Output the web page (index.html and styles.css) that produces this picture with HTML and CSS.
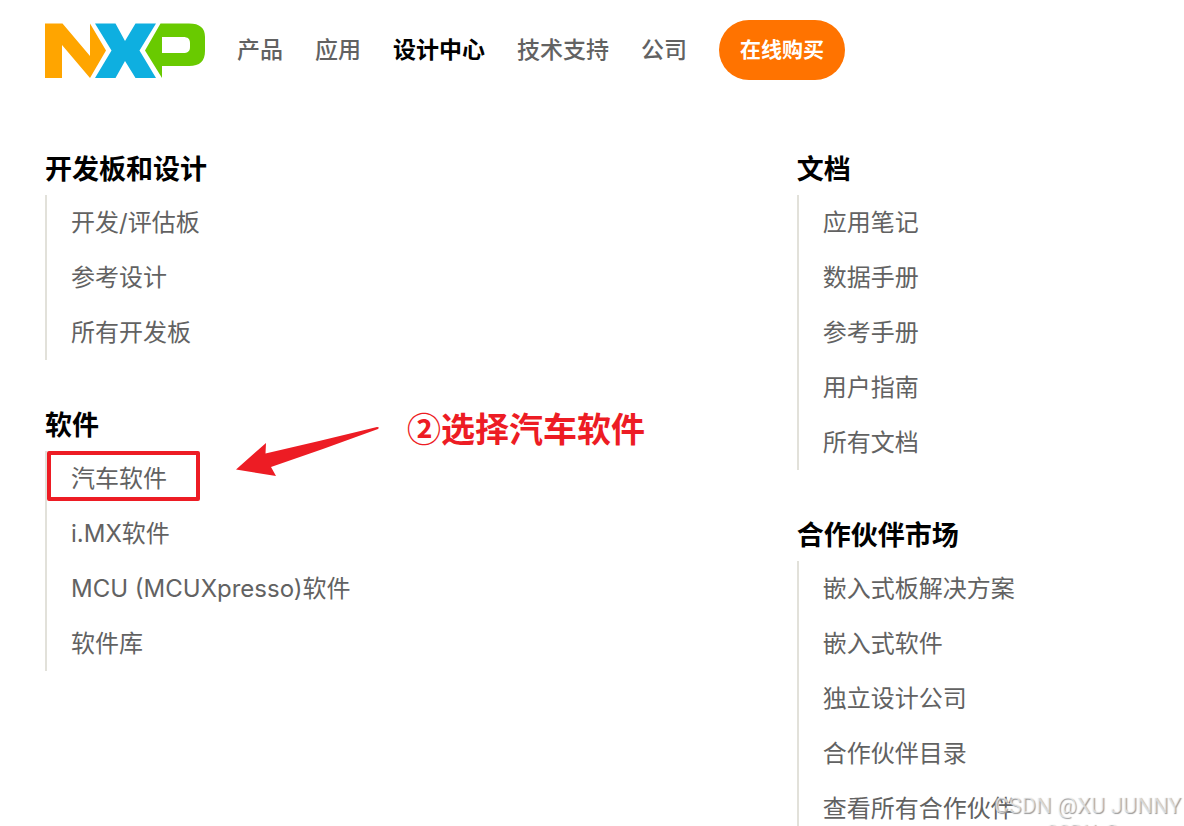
FILE: index.html
```html
<!DOCTYPE html>
<html lang="zh-CN">
<head>
<meta charset="utf-8">
<title>NXP 设计中心</title>
<link rel="stylesheet" href="styles.css">
</head>
<body>
<div class="page">
  <header class="header">
    <a class="logo" href="#" aria-label="NXP">
      <svg width="160" height="56" viewBox="0 -1 160 56" aria-hidden="true">
        <path fill="#ffa500" d="M0 .5h17.500L45 33V.5L61 27.500 45 55 17 22v33H0z"/>
        <path fill="#0eafe0" d="M50 .5h20.500L80 18 90.500.5H111L94.500 27.500 111 55H90.500L80 38 70.500 55H50L66.500 27.500z"/>
        <path fill="#69ca00" fill-rule="evenodd" d="M115.500.5H144C155 .5 160 5 160 14v14c0 10-5 15-16 15h-27v12L100 27.500zM117 14v16h21c5 0 7-2 7-6v-4c0-4-2-6-7-6z"/>
      </svg>
    </a>
    <nav class="nav">
      <a href="#">产品</a>
      <a href="#">应用</a>
      <a class="current" href="#">设计中心</a>
      <a href="#">技术支持</a>
      <a href="#">公司</a>
    </nav>
    <button class="buy" type="button">在线购买</button>
  </header>
  <main class="menu">
    <div class="column">
      <section>
        <h2>开发板和设计</h2>
        <ul>
          <li><a href="#">开发/评估板</a></li>
          <li><a href="#">参考设计</a></li>
          <li><a href="#">所有开发板</a></li>
        </ul>
      </section>
      <section>
        <h2>软件</h2>
        <ul>
          <li class="marked">
            <a href="#">汽车软件</a>
            <svg class="arrow" width="144" height="52" viewBox="0 0 144 52" aria-hidden="true">
              <path fill="#ed1c24" d="M0 43.500 30 17l-.5 10.500Q84 15 141 1q3 0 1 2Q88 23 35 41l5 9z"/>
            </svg>
            <strong class="note">②选择汽车软件</strong>
          </li>
          <li><a href="#">i.MX软件</a></li>
          <li><a href="#">MCU (MCUXpresso)软件</a></li>
          <li><a href="#">软件库</a></li>
        </ul>
      </section>
    </div>
    <div class="column">
      <section>
        <h2>文档</h2>
        <ul>
          <li><a href="#">应用笔记</a></li>
          <li><a href="#">数据手册</a></li>
          <li><a href="#">参考手册</a></li>
          <li><a href="#">用户指南</a></li>
          <li><a href="#">所有文档</a></li>
        </ul>
      </section>
      <section>
        <h2>合作伙伴市场</h2>
        <ul>
          <li><a href="#">嵌入式板解决方案</a></li>
          <li><a href="#">嵌入式软件</a></li>
          <li><a href="#">独立设计公司</a></li>
          <li><a href="#">合作伙伴目录</a></li>
          <li><a href="#">查看所有合作伙伴</a></li>
        </ul>
      </section>
    </div>
  </main>
  <div class="watermark">CSDN @XU JUNNY</div>
  <div class="watermark second">CSDN @</div>
</div>
</body>
</html>
```

FILE: styles.css
```css
*, *::before { box-sizing: border-box; }
body {
  margin: 0;
  background: #fff;
  color: #000;
  font-family: Inter, "Noto Sans CJK SC", sans-serif;
}
a { color: inherit; text-decoration: none; }
.page {
  position: relative;
  height: 100vh;
  overflow: hidden;
}
.header {
  display: flex;
  align-items: center;
  gap: 32px;
  padding: 20px 45px;
}
.logo, .logo svg { display: block; }
.nav {
  display: flex;
  gap: 32px;
  color: #626262;
  font-size: 23px;
  font-weight: 500;
  line-height: 32px;
}
.nav .current { color: #000; font-weight: 700; }
.buy {
  height: 60px;
  padding: 0 21px;
  border: 0;
  border-radius: 30px;
  background: #ff7300;
  color: #fff;
  font: 700 21px/32px Inter, "Noto Sans CJK SC", sans-serif;
}
.menu {
  display: grid;
  grid-template-columns: 66% 1fr;
  padding: 50px 0 0 45px;
}
.column {
  display: flex;
  flex-direction: column;
  gap: 46px;
}
h2 {
  margin: 0 0 5px;
  font-size: 27px;
  font-weight: 700;
  line-height: 40px;
}
ul {
  margin: 0;
  padding: 0 0 0 24px;
  border-left: 2px solid #e2e1da;
  list-style: none;
}
li {
  position: relative;
  color: #626262;
  font-size: 24px;
  line-height: 55px;
}
li a { display: block; }
/* Frame, arrow and caption drawn over the menu */
.marked::before {
  content: "";
  position: absolute;
  top: 0;
  left: -24px;
  width: 153px;
  height: 50px;
  border: 4px solid #ed1c24;
  border-radius: 2px;
}
.arrow {
  position: absolute;
  top: -25px;
  left: 165px;
}
.note {
  position: absolute;
  top: -48px;
  left: 336px;
  color: #ed1c24;
  font: 700 34px/50px "Noto Sans CJK SC", sans-serif;
  white-space: nowrap;
}
.watermark {
  position: absolute;
  right: 3px;
  bottom: 6px;
  color: rgba(255, 255, 255, 0.6);
  font: 22px/28px Roboto, sans-serif;
  text-shadow: 1px 1px 1px #999;
}
.watermark.second {
  right: 64px;
  bottom: -18px;
  font-size: 20px;
  line-height: 24px;
}
```
